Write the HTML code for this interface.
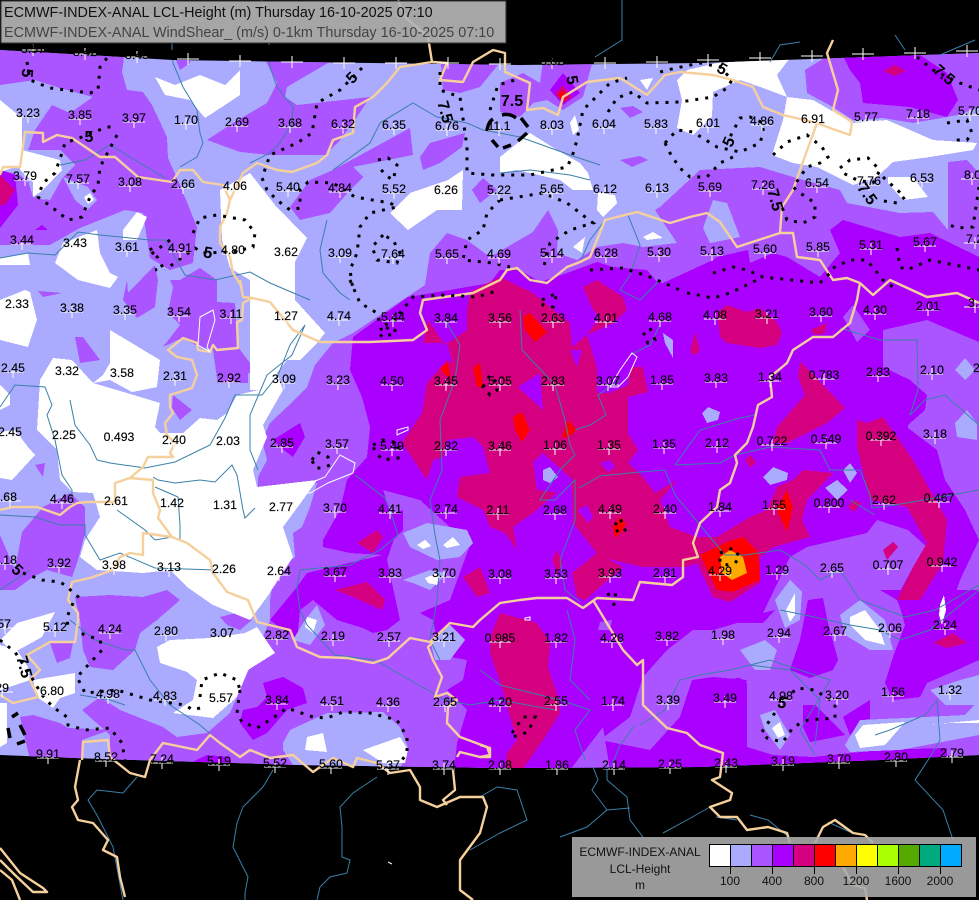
<!DOCTYPE html>
<html lang="en">
<head>
<meta charset="utf-8">
<title>ECMWF-INDEX-ANAL LCL-Height</title>
<style>
html,body{margin:0;padding:0;background:#000;width:979px;height:900px;overflow:hidden}
svg{display:block;font-family:"Liberation Sans",sans-serif}
.d{fill:none;stroke:#000;stroke-width:3;stroke-dasharray:3 7}
.r{fill:none;stroke:#3a80a8;stroke-width:1}
.b{fill:none;stroke:#f6d09c;stroke-width:2.4;stroke-linejoin:round}
.t text{font-size:12.3px;text-anchor:middle;fill:#000;stroke:#000;stroke-width:.15}
.c text{font-size:16px;font-weight:bold;text-anchor:middle;fill:#000}
.s path{shape-rendering:crispEdges}
</style>
</head>
<body>
<svg width="979" height="900" viewBox="0 0 979 900" xmlns="http://www.w3.org/2000/svg">
<defs>
<clipPath id="m"><path d="M0 50L173 60L300 62L520 65L700 63L840 58L979 53V755L880 760L700 767L500 768L300 765L100 759L0 755Z"/></clipPath>
<marker id="x" markerUnits="userSpaceOnUse" markerWidth="24" markerHeight="14" refX="12" refY="7" overflow="visible"><path d="M1 7h22M12 1v12" stroke="#fff" stroke-width="1" fill="none"/></marker>
</defs>
<rect width="979" height="900" fill="#000"/>
<g clip-path="url(#m)">
<rect width="979" height="900" fill="#aaaaff"/>
<!-- light purple -->
<g fill="#aa55ff" class="s">
<path d="M0 50L125 50L122 72L127 90L143 92L152 105L167 137L168 158L180 185L197 227L193 263L170 270L150 258L143 213L125 210L80 228L50 245L0 245Z"/>
<path d="M260 50L350 50L287 87L285 97L297 105L370 97L355 120L340 140L325 155L270 155L240 152L207 140L233 123L267 103L277 83Z"/>
<path d="M440 50L510 50L480 87L460 93L443 90Z"/>
<path d="M172 50L190 50L190 63L180 70Z"/>
<path d="M500 83L523 73L540 83L543 62L593 60L583 97L563 110L547 100L533 103L520 117L500 112Z"/>
<path d="M420 157L430 143L465 133L462 147L440 163L423 170Z"/>
<path d="M472 190L483 178L497 190L480 203Z"/>
<path d="M333 170L410 128L413 155L353 167L363 177L350 190L330 213L300 220L290 207L310 180Z"/>
<path d="M620 108L633 106L643 112L630 118Z"/>
<path d="M620 160L640 156L648 160L632 167Z"/>
<path d="M805 70L837 50L979 50V107L958 115L930 120L913 123L883 118L853 120L833 107L807 93Z"/>
<path d="M948 162L967 160L979 173V260H948Z"/>
<path d="M38 291L62 293L43 297Z"/>
<path d="M127 280L128 293L155 265L158 280L155 307L137 318L123 300Z"/>
<path d="M170 280L180 280L200 268L217 280L217 302L235 303L238 347L250 363L267 363L258 375L248 373L248 383L218 383L217 378L213 350L200 347L182 338L163 347L180 325L168 313L173 287Z"/>
<path d="M75 337L83 337L100 360L80 363Z"/>
<path d="M173 395L192 410L180 420L172 408Z"/>
<path d="M35 465L45 463L43 477Z"/>
<path d="M0 535L15 570L22 532L43 507L70 493L85 507L85 533L78 560L72 577L47 570L33 577L15 590L0 590Z"/>
<path d="M75 597L110 595L143 597L167 590L180 600L157 620L140 633L135 650L113 670L90 667L83 650L80 620Z"/>
<path d="M50 643L73 643L70 658L57 663Z"/>
<path d="M220 617L240 612L252 620L240 630L227 625Z"/>
<path d="M20 717L33 715L60 723L68 728L110 730L82 740L82 770L30 760Z"/>
<path d="M82 710L100 697L120 710L163 727L177 737L207 733L230 713L250 667L283 660L310 667L333 683L377 677L397 690L422 720L422 780H110V735Z"/>
<path d="M430 253L447 233L467 240L490 257L533 232L548 210L558 230L557 253L577 260L597 247L623 243L643 247L677 243L655 210L660 207L700 170L760 167L793 177L840 190L847 203L900 213L933 212L948 230L979 243V780H250V667L270 620L270 600L273 582L287 563L295 557L293 533L302 527L310 507L317 483L290 490L270 497L258 490L258 477L267 460L262 440L270 423L287 407L307 387L315 365L333 343L353 333L425 285Z"/>
</g>
<!-- strong purple -->
<g fill="#aa00ff" class="s">
<path d="M353 337L408 297L450 290L490 283L500 270L520 270L540 282L567 273L597 262L613 267L647 270L657 282L663 283L713 260L717 257L748 250L750 263L773 253L787 257L820 277L840 253L830 230L843 220L900 237L930 233L979 257V342L927 320L883 330L883 367L910 380L927 395L925 410L908 425L908 428L937 450L945 480L965 510L979 540L960 580L947 620V780H453L457 743L467 710L447 690L463 680L467 660L440 655L433 620L420 613L400 620L387 630L373 633L363 628L337 620L313 600L300 610L297 640L270 620L297 587L307 573L340 565L383 555L350 553L323 547L323 540L340 510L347 480L367 457L370 427L362 397L350 370Z"/>
<path d="M840 50L907 50L920 55L947 73L958 100L947 117L910 107L863 103L860 83L850 70Z"/>
<path d="M550 90L563 73L580 93L563 105Z"/>
<path d="M273 440L300 423L305 437L293 457L280 447Z"/>
<path d="M0 170L15 175L18 205L0 228Z"/>
<path d="M42 225L48 230L35 230Z"/>
<path d="M263 683L283 677L303 688L307 703L287 710L267 733L253 740L240 723L243 710L257 707L267 697Z"/>
<path d="M190 763L207 755L230 757L233 770H190Z"/>
</g>
<!-- light purple over strong -->
<g fill="#aa55ff" class="s">
<path d="M630 717L643 677L667 650L693 630L713 630L737 623L763 623L775 610L763 613L790 557L807 547L867 533L877 520L908 530L927 547L913 567L897 597L905 625L893 657L979 620V747L880 750L813 757L773 755L747 747L725 730L747 680L713 677L692 680L680 717L650 750L600 740Z"/>
<path d="M570 770L603 727L610 770Z"/>
<path d="M330 730L343 728L357 735L347 743Z"/>
<path d="M843 317L853 305L870 330L857 342Z"/>
<path d="M497 345L505 335L520 345Z"/>
<path d="M600 622L612 620L610 630L598 630Z"/>
<path d="M383 490L420 500L470 545L450 600L420 613L400 620L387 560L397 530Z"/>
</g>
<g fill="#aa00ff" class="s">
<path d="M808 600L823 598L828 623L838 660L833 670L810 678L790 670L800 640Z"/>
<path d="M880 590H979V660L957 670L927 683L920 697L893 700L885 683L893 657L910 633L897 600Z"/>
<path d="M843 717L870 700L870 720L850 735Z"/>
<path d="M803 705L815 705L835 725L845 735L810 742L803 727Z"/>
<path d="M707 680L740 678L747 683L747 747L700 760L680 750L693 700Z"/>
<path d="M370 523L403 510L403 530L380 555Z"/>
</g>
<!-- magenta -->
<g fill="#d5007f" class="s">
<path d="M470 292L500 277L533 293L570 323L572 347L587 335L597 368L603 368L643 367L648 392L628 397L628 433L638 450L628 463L643 477L655 493L677 480L660 500L670 527L697 537L717 537L750 517L767 510L777 487L793 480L803 470L833 473L807 500L802 520L810 537L773 547L760 557L760 583L730 602L713 597L697 563L685 567L643 567L600 557L573 523L572 483L560 490L533 513L513 527L517 550L505 533L490 527L483 510L457 497L460 477L490 473L483 447L473 437L447 440L443 457L433 460L427 480L402 443L422 413L427 383L447 360L453 363L447 343L423 343L428 320L445 345L467 330L467 310Z"/>
<path d="M583 287L597 280L623 297L627 310L613 323L587 335L600 317L593 310Z"/>
<path d="M717 313L727 305L747 312L760 308L777 322L782 333L777 345L760 348L727 343L720 337Z"/>
<path d="M690 352L695 332L700 350L695 355Z"/>
<path d="M810 330L827 323L825 333L815 335Z"/>
<path d="M800 362L807 368L845 408L827 423L787 443L773 443L777 427L805 395L798 377Z"/>
<path d="M883 71L895 65L906 71L895 76Z"/>
<path d="M555 93L563 85L572 97L563 103Z"/>
<path d="M0 175L15 190L5 205L0 205Z"/>
<path d="M500 613L537 623L550 643L548 667L558 697L560 713L543 740L522 770L505 770L507 753L517 740L510 717L502 687L490 653L490 637Z"/>
<path d="M357 543L377 530L383 537L373 553Z"/>
<path d="M335 590L367 582L385 600L382 610L353 597Z"/>
<path d="M463 577L480 567L490 593L477 597Z"/>
<path d="M458 487L480 477L500 497L500 513L480 500L458 493Z"/>
<path d="M552 560L557 550L563 563L557 573Z"/>
<path d="M572 573L597 553L623 567L585 600L577 597Z"/>
<path d="M857 420L867 423L883 417L913 460L947 520L943 563L920 600L897 600L913 567L927 543L907 507L870 500L857 447Z"/>
<path d="M883 550L893 542L898 547L887 560Z"/>
<path d="M848 507L853 500L862 503L853 512Z"/>
<path d="M745 460L750 455L756 462L750 468Z"/>
<path d="M933 643L953 633L967 643L947 648Z"/>
</g>
<!-- holes in magenta -->
<g fill="#aa00ff" class="s">
<path d="M533 462L543 453L573 480L560 493L537 490Z"/>
<path d="M518 387L540 373L543 410Z"/>
<path d="M570 350L582 350L577 367Z"/>
<path d="M600 463L610 460L615 467L608 472Z"/>
<path d="M578 510L587 505L593 517L588 523Z"/>
<path d="M597 368L608 365L632 360L628 385L610 393L597 393Z"/>
</g>
<!-- red and orange -->
<g fill="#ff0000" class="s">
<path d="M523 317L530 313L547 332L535 342L525 330Z"/>
<path d="M513 417L522 412L530 430L522 442L515 430Z"/>
<path d="M562 437L568 420L577 430L567 438Z"/>
<path d="M778 507L787 490L793 507L787 532L778 513Z"/>
<path d="M613 527L620 517L626 523L623 530L615 538Z"/>
<path d="M700 555L727 542L743 537L758 552L760 580L733 592L717 590Z"/>
<path d="M440 368L448 363L450 377L445 375Z"/>
<path d="M473 368L480 363L483 387L477 387Z"/>
<path d="M558 95L563 90L567 97L563 102Z"/>
</g>
<path fill="#ffaa00" d="M720 557L730 550L743 557L747 573L732 580L722 573Z"/>
<!-- periwinkle patches -->
<g fill="#aaaaff" class="s">
<path d="M0 85L35 80L60 88L93 97L70 113L52 105L35 130L23 165L33 197L45 200L20 175L0 170Z"/>
<path d="M20 150L60 150L75 165L63 177L50 200L33 197Z"/>
<path d="M63 177L88 187L97 200L87 210L75 200Z"/>
<path d="M713 200L727 203L740 237L710 243L703 228Z"/>
<path d="M702 413L708 407L720 412L718 420L707 423Z"/>
<path d="M763 477L773 467L788 473L787 480L770 485Z"/>
<path d="M825 488L837 480L848 490L837 500Z"/>
<path d="M843 470L850 463L857 473L850 483Z"/>
<path d="M663 333L673 340L673 358L665 343Z"/>
<path d="M955 423L967 410L977 423L977 440L957 437Z"/>
<path d="M955 370L965 358L975 370L965 380Z"/>
<path d="M543 470L550 467L558 477L550 483L543 480Z"/>
<path d="M283 743L290 730L327 713L383 712L400 727L408 747L400 770L333 770L293 765L283 750Z"/>
<path d="M403 533L427 523L467 530L473 543L460 557L437 560L410 547Z"/>
<path d="M403 580L430 570L447 573L430 590L413 583Z"/>
<path d="M775 600L790 580L802 592L800 620L785 628Z"/>
<path d="M840 615L860 600L885 620L893 650L870 650L845 635Z"/>
<path d="M740 650L765 640L777 650L770 670L755 670Z"/>
<path d="M845 745L860 720L905 718L965 715L979 700V735L900 750L850 752Z"/>
<path d="M760 715L775 710L790 735L780 750L765 730Z"/>
<path d="M930 690L960 680L979 675V705L945 705Z"/>
<path d="M305 620L317 605L325 625L310 645L293 640Z"/>
<path d="M430 640L450 625L465 640L450 660L435 660Z"/>
<path d="M93 383L127 393L125 410L130 427L115 450L98 470L90 447L100 427Z"/>
<path d="M110 520L118 505L113 520Z"/>
<path d="M200 535L213 527L220 535L208 547Z"/>
<path d="M247 540L270 523L270 527L255 540L247 540Z"/>
</g>
<!-- whites -->
<g fill="#fff" class="s">
<path d="M0 100L22 118L22 165L0 172Z"/>
<path d="M22 150L60 160L62 170L43 190L33 197L33 182L20 170Z"/>
<path d="M84 197L90 193L94 200L88 204Z"/>
<path d="M155 77L175 85L200 75L225 85L240 70L240 95L225 105L205 118L190 100L165 95Z"/>
<path d="M0 258L28 253L30 265L0 265Z"/>
<path d="M55 263L63 243L97 230L100 253L110 273L118 277L110 288L78 280Z"/>
<path d="M123 230L137 212L147 217L137 240L123 240Z"/>
<path d="M0 300L25 290L30 292L37 320L28 347L0 340Z"/>
<path d="M220 190L250 173L275 205L307 238L295 262L295 300L325 333L317 343L300 360L287 360L277 373L283 390L250 390L250 280L230 268L222 240Z"/>
<path d="M110 330L160 360L157 387L132 392L110 380L93 383L103 375L110 363Z"/>
<path d="M53 358L72 360L93 383L127 393L160 403L155 427L160 433L183 433L200 418L217 420L227 413L237 395L267 388L283 390L263 425L267 437L253 470L257 487L317 480L305 497L283 527L293 557L267 597L250 620L213 605L187 587L170 570L143 573L97 570L80 557L85 540L100 517L93 493L72 492L60 480L57 450L37 430L40 380Z"/>
<path d="M0 385L10 395L10 405L0 410Z"/>
<path d="M0 432L15 430L28 447L35 455L12 480L0 478Z"/>
<path d="M17 623L55 612L42 637L13 653L0 640Z"/>
<path d="M157 647L170 640L210 638L245 633L257 627L275 653L248 670L237 697L213 718L173 713L193 700L197 680L187 672L160 663Z"/>
<path d="M33 680L75 673L75 693L60 698L53 708L37 697Z"/>
<path d="M0 703L7 703L7 743L0 747Z"/>
<path d="M0 645L17 650L28 667L30 680L0 690Z"/>
<path d="M307 737L323 733L327 752L305 750Z"/>
<path d="M363 750L400 737L408 750L405 763L383 763Z"/>
<path d="M307 617L317 620L313 633L305 627Z"/>
<path d="M790 58L777 75L787 97L763 88L740 80L713 92L712 117L693 135L677 128L682 100L677 80L687 70L717 63Z"/>
<path d="M787 97L813 100L853 123L887 120L933 140L977 143L973 150L930 157L893 162L877 177L853 185L817 167L793 163L772 155L783 120Z"/>
<path d="M888 177L913 177L928 197L903 200L888 183Z"/>
<path d="M500 157L530 133L557 150L580 163L588 173L593 190L573 190L560 180L517 170L500 173Z"/>
<path d="M390 213L410 193L448 180L463 170L462 210L437 210L408 230Z"/>
<path d="M598 193L615 195L617 203L603 217L597 210Z"/>
<path d="M643 237L653 232L663 238L647 240Z"/>
<path d="M573 247L585 237L582 253Z"/>
<path d="M570 123L575 115L579 130L573 135Z"/>
<path d="M640 80L653 78L647 90Z"/>
<path d="M417 545L425 540L431 546L423 549Z"/>
<path d="M443 545L453 537L460 545L447 548Z"/>
<path d="M425 578L440 572L437 585L428 583Z"/>
<path d="M786 610L795 593L795 615L790 622Z"/>
<path d="M850 617L865 610L880 630L885 645L865 640L850 625Z"/>
<path d="M855 735L863 725L905 722L885 745L860 748Z"/>
<path d="M772 728L780 722L785 735L778 738Z"/>
<path d="M940 605L944 595L946 610L942 625L939 615Z"/>
<path d="M925 725L979 720V723L950 723Z"/>
</g>
<!-- rivers on map -->
<g class="r">
<path d="M172 50L173 63L183 87L197 110L200 133L203 143L197 157L180 167"/>
<path d="M269 45L270 67L277 87L293 107L292 123L280 143L270 153L250 163"/>
<path d="M327 220L320 250L323 273L340 293L350 300"/>
<path d="M333 170L370 143L380 123L413 103L437 117L467 123L483 130L520 137L570 155L600 165"/>
<path d="M60 165L85 160L110 145L135 160L165 178"/>
<path d="M0 258L28 253L55 255L78 232L100 235L150 240L165 240L185 275L215 280L250 272L270 283L310 300"/>
<path d="M500 173L530 170L570 175L590 180"/>
<path d="M605 220L590 240L580 262"/>
<path d="M628 215L640 245L630 275L620 290L640 300L660 280"/>
<path d="M0 407L15 385L45 387L52 405L47 415L55 440L62 475L72 490L72 505"/>
<path d="M70 400L75 425L90 445L97 460L110 463L145 468L175 462L210 445L225 418L235 395L262 395L278 375L290 345L305 325L292 355L267 375L250 415L250 450L258 470"/>
<path d="M153 477L158 480L175 483L200 480L215 482L232 465L237 475L243 510L245 518L255 508"/>
<path d="M155 487L178 497L180 525L180 540"/>
<path d="M117 510L145 530L155 540L172 537"/>
<path d="M0 515L35 517L60 525L85 525L85 535L100 560L120 553L155 568L215 570"/>
<path d="M30 570L0 590"/>
<path d="M355 475L385 498L390 510L398 535L380 550L350 565L300 570L297 587L300 610L307 625L335 655L375 660L410 680L445 700L470 705L500 700L555 710"/>
<path d="M70 620L95 640L125 650L135 650L150 680L170 705L200 725L215 738"/>
<path d="M80 695L110 700L125 705"/>
<path d="M445 320L460 345L455 380L440 420L442 470L430 500L435 535L440 560L437 600L430 640L440 660"/>
<path d="M520 310L522 350L555 385L565 420L570 445L575 455L560 470L540 500L555 500L575 480L575 520L560 560L565 590L580 602"/>
<path d="M579 488L600 476L640 472L665 470L675 495L700 525L725 555L745 555L780 550L805 565L820 580L840 570L860 600L905 617L935 610L979 585"/>
<path d="M675 465L700 430L740 418L755 415"/>
<path d="M675 465L720 463L735 455L770 447L820 450L830 470L860 470L870 495L872 508L895 505L940 497L979 490"/>
<path d="M850 500L875 515"/>
<path d="M660 325L650 345L630 355"/>
<path d="M620 380L598 395L606 415L590 425L575 430"/>
<path d="M840 328L880 340L917 340L918 390L910 415L925 400L945 395L979 425"/>
<path d="M480 670L500 685L520 690L560 700L590 710L575 730L585 760"/>
<path d="M567 610L575 640L570 680L590 700"/>
<path d="M635 725L620 745L610 770"/>
<path d="M640 725L665 710L680 680L700 675L730 670L750 665L770 660L830 680L800 730L815 755"/>
<path d="M750 665L790 670L820 700L815 745"/>
<path d="M875 735L890 730L925 715L937 700L940 740L930 757"/>
<path d="M780 610L805 615L850 625L880 630L900 640L930 630L979 590"/>
</g>
</g>
<!-- rivers outside map / black -->
<g class="r">
<path d="M273 770L263 787L243 807L237 823L233 847L248 877L245 893L245 900"/>
<path d="M377 777L353 793L340 807L342 827L342 857L350 860L347 873L330 877L320 887L317 900"/>
<path d="M137 777L123 793L97 790L88 800L98 817L113 847L123 900"/>
<path d="M480 797L497 787L517 790L527 820L500 833L470 850"/>
<path d="M593 767L598 780L592 790L607 810L587 827L560 837"/>
<path d="M607 767L607 780L627 797L630 820L643 837"/>
<path d="M607 810L630 808"/>
<path d="M710 807L687 820L663 833"/>
<path d="M930 757L915 780L943 810L953 840"/>
<path d="M716 817L737 820"/>
<path d="M750 815L768 820L790 838"/>
<path d="M828 822L850 832"/>
<path d="M172 50L172 35L150 15L130 0"/>
<path d="M269 45L269 30L262 0"/>
<path d="M440 40L435 20"/>
<path d="M595 57L622 40L622 0"/>
<path d="M770 62L780 45L800 42"/>
<path d="M940 55L975 40"/>
<path d="M905 50L895 35"/>
</g>
<!-- borders -->
<g class="b">
<path d="M0 175L3 167L20 167L25 132L43 133L43 142L57 135L72 138L100 157L115 157L138 177L172 182L180 170L193 170L203 182L223 185L230 200L243 173L257 163L277 170L292 172L317 163L327 155L333 140L353 133L355 107L373 97L387 83L400 67L432 62L428 37L405 17L398 0"/>
<path d="M432 62L447 63L440 80L463 82L473 62L493 50L505 53L505 72L530 83L527 110L543 108L558 115L563 97L587 82L620 78L647 95L665 75L680 72L713 75L733 80L753 87L763 107L783 115L817 123L830 128L850 135L852 122L833 110L838 90L827 53L833 40"/>
<path d="M817 123L800 170L793 190L782 207L780 233L793 233L797 257L820 260L833 280L847 278L860 283L857 300L850 323L833 337L813 337L793 350L787 363L770 377L772 397L758 405L753 427L747 443L735 455L737 463L730 483L720 490L717 507L700 523L693 543L698 557L683 560L683 577L672 585L640 582L633 600L597 598L583 608L567 598L537 598L520 600L500 603L480 620L473 627L450 623L430 642L410 638L388 658L373 663L347 658L320 657L297 647L290 630L257 622L248 600L227 592L213 573L210 560L187 543L172 537L158 518L160 510L153 493L153 480L130 478L115 483L115 502L87 502L77 503L70 507L60 515L37 507L13 507L0 510"/>
<path d="M860 283L873 295L890 280L927 297L957 293L979 303"/>
<path d="M240 280L243 297L252 298L243 303L242 320L237 322L238 348L217 350L213 345L210 352L198 350L197 343L183 338L168 350L177 357L192 360L197 375L192 388L170 395L170 407L173 413L165 423L167 435L175 443L170 453L173 457L148 457L143 467L130 478"/>
<path d="M230 200L227 213L220 227L220 243L230 257L233 273L242 287"/>
<path d="M252 298L270 302L293 330L320 342L370 342L413 340L427 330L420 313L423 300L473 293L500 280L507 270L517 268L530 280L547 283L567 267L580 262L590 257L605 220L637 212L670 223L690 217L707 213L720 222L737 247L780 233"/>
<path d="M172 537L143 533L143 555L130 553L120 557L113 570L90 578L72 582L68 600L78 613L78 620L75 642L50 642L27 655L40 670L30 680L38 697L13 703L0 695"/>
<path d="M593 600L623 650L637 665L643 660L643 680L643 705L667 728L687 733L700 745L723 753L720 777L712 780L732 793L730 800L710 807L720 817L737 817L747 830L768 827L787 833L790 843"/>
<path d="M815 843L823 827L835 820L853 833L865 835L873 843"/>
<path d="M843 867L853 885L865 888L867 900"/>
<path d="M82 760L83 742L108 740L110 757L130 773L145 777L150 760L163 743L197 750L210 735L220 743L240 757L250 750L270 758L293 755L313 772L333 758L353 767L357 758L377 763L390 773L410 770L420 787L420 800L437 807L460 797L483 797L487 807L480 833L460 860L460 890L473 900"/>
<path d="M80 760L75 787L78 800L72 807L78 820L93 823L108 840L103 850L117 857L120 877L125 897"/>
<path d="M453 770L455 790L443 800L447 805"/>
<path d="M457 757L460 752L480 757L490 755L487 747L460 737L447 723L448 707L457 700L447 693L435 697L442 677L433 660L428 647L433 642"/>
<path d="M480 745L490 748L490 757L480 757"/>
<path d="M0 848L20 873L43 888L47 892L33 892L15 875L0 860"/>
<path d="M0 870L12 880L20 900"/>
</g>
<!-- lakes -->
<g fill="none" stroke="#fff" stroke-width="1">
<path d="M257 497L267 502L283 495L293 490L325 477L340 455L355 463L353 473L328 483L310 493L297 492"/>
<path d="M200 317L213 310L215 320L207 347L210 352L198 345Z"/>
<path d="M397 430L408 427L408 430L397 435Z"/>
<path d="M620 370L632 353L637 357L628 377L618 387L610 387Z"/>
<path d="M525 618L530 617L530 620L525 620Z"/>
<path d="M388 862L392 864"/>
</g>
<!-- dotted contours -->
<g clip-path="url(#m)"><g class="d">
<path d="M27 62L30 80L50 88L90 93L98 90L100 67L107 58"/>
<path d="M117 135L108 152L100 167L98 185L90 197L82 217L68 220L53 208L38 197L43 183L55 173L62 153L65 143L82 137L107 127L115 127"/>
<path d="M362 68L340 90L317 103L312 133L297 143L270 155L262 178L267 190L277 200L290 210L300 208L300 190L308 182L333 183L355 197L390 203L397 207L370 213L360 227L357 253L350 270L353 290"/>
<path d="M193 233L200 218L217 215L245 220L255 233L253 247L233 252L203 253L195 248L165 270"/>
<path d="M440 72L440 90L460 97L467 147L467 173L493 175L530 175L567 167L572 157L577 140L583 110L610 83L627 78"/>
<path d="M378 160L388 158L397 165L393 180L385 175L378 165"/>
<path d="M383 235L372 247L377 260L397 263L400 253L393 240Z"/>
<path d="M500 200L487 213L483 230L467 240L463 260L493 263L510 267"/>
<path d="M608 112L617 98L633 92L647 103L680 102L713 97L727 88L732 80L720 67L700 63L667 70L657 73"/>
<path d="M500 200L543 193L567 203L593 223L570 230L550 243L543 270"/>
<path d="M665 143L677 130L693 132L717 147L740 152L760 143L763 133L763 123L750 117L740 118L730 137"/>
<path d="M665 143L672 157L682 170L690 177L707 177L720 163L733 157"/>
<path d="M773 155L787 142L807 135L822 147L828 157L820 163L807 167L793 187L800 193L815 203L815 217L803 223L787 220L782 207"/>
<path d="M840 168L850 160L868 158L880 170L873 183L857 180L843 173"/>
<path d="M883 177L905 197L897 203L877 200"/>
<path d="M917 57L933 70L960 83L979 90"/>
<path d="M947 123L967 120L972 133L967 140L950 140"/>
<path d="M979 187L975 213L973 227L957 228L945 223"/>
<path d="M897 248L900 267L907 270L930 260L979 270"/>
<path d="M833 268L850 260L867 260L883 280L893 287"/>
<path d="M713 273L733 267L747 270L763 277L820 283L833 270"/>
<path d="M590 270L623 268L650 277L680 290"/>
<path d="M687 293L713 298L730 293L757 280"/>
<path d="M350 280L360 303L377 313L382 332L380 337L413 297L443 295L477 297L500 290"/>
<path d="M385 325L395 320L395 335L383 335"/>
<path d="M312 460L317 452L328 457L330 465L323 468L315 468Z"/>
<path d="M373 445L383 440L398 443L398 458L383 460L375 452Z"/>
<path d="M483 387L490 375L497 383L497 390L490 395Z"/>
<path d="M542 300L557 293L553 307L543 305Z"/>
<path d="M643 335L650 328L655 340L648 343Z"/>
<path d="M615 525L620 518L625 530L618 533Z"/>
<path d="M720 553L733 548L740 557L735 563L728 565L720 563Z"/>
<path d="M607 595L615 592L616 600L610 612"/>
<path d="M512 733L523 717L535 717L528 732L513 737Z"/>
<path d="M762 732L772 717L782 703L797 688L815 690L835 703L835 718L808 720L793 727L787 737L782 742L767 738Z"/>
<path d="M240 690L237 713L242 722L257 728L273 718L287 708L313 717L327 718L343 712L370 713L397 720L407 737L407 753L400 763"/>
<path d="M200 697L202 680L220 673L237 680L240 690"/>
<path d="M200 708L193 710L185 705L150 700L117 690L85 693L77 677L90 663L102 650L100 640L77 632"/>
<path d="M0 640L15 652L32 678L42 695L53 707L67 717L68 725L85 730L110 728L122 743L125 760"/>
<path d="M73 603L67 617L68 628"/>
<path d="M23 573L42 580L60 582L68 587L73 593L80 598"/>
<path d="M150 248L158 258L163 268L155 270"/>
<path d="M490 110L498 85L515 80"/>
<path d="M170 240L150 255"/>
</g></g>
<!-- thick dashes -->
<path fill="none" stroke="#000" stroke-width="3.5" d="M487 131Q488 122 493 119M502 115Q510 113 516 118M521 118L528 127M527 133L518 141M492 140L498 147M503 148L511 145M10 738L8 728M12 717L18 713M20 725L25 735M17 744L25 741"/>
<!-- station crosses -->
<polyline fill="none" stroke="none" marker-start="url(#x)" marker-mid="url(#x)" marker-end="url(#x)" points="33,50 85,54 137,57 188,59 240,61 292,62 344,63 396,63 448,63 500,64 552,63 605,63 657,62 708,60 760,58 812,56 863,54 915,53 967,51 28,117 80,119 134,122 186,124 237,126 290,127 343,128 394,129 447,130 499,130 552,129 604,128 656,128 708,127 762,125 813,123 866,121 918,118 970,115 25,180 78,183 130,186 183,188 235,190 288,191 340,192 394,193 446,194 499,194 552,193 605,193 657,192 710,191 763,189 817,187 869,185 922,182 972,179 22,244 75,247 127,251 180,252 233,254 286,256 340,257 393,258 447,258 499,258 552,257 606,257 659,256 712,255 765,253 818,251 871,249 925,246 975,243 17,308 72,312 125,314 179,316 231,318 286,320 339,320 393,321 446,322 500,322 553,322 606,322 660,321 715,319 767,318 821,316 875,314 928,310 975,307 13,372 67,375 122,377 175,380 229,382 284,383 338,384 392,385 446,385 500,385 553,385 608,385 662,384 716,382 770,381 824,379 878,376 932,374 10,436 64,439 119,441 174,444 228,445 282,447 337,448 392,450 446,450 500,450 555,449 609,449 664,448 717,447 772,445 826,443 881,440 935,438 10,501 62,503 116,505 172,507 225,509 281,511 335,512 390,513 446,513 498,514 555,514 610,513 665,513 720,511 774,509 829,507 884,504 939,502 5,564 59,567 114,569 169,571 224,573 279,575 335,576 390,577 444,577 500,578 556,578 610,577 665,577 720,575 777,574 832,572 888,569 942,566 5,628 55,631 110,633 166,635 222,637 277,639 333,640 389,641 444,641 500,642 556,642 612,642 667,640 723,639 779,637 835,635 890,632 945,629 2,692 52,695 108,698 165,700 221,702 277,704 332,705 388,706 445,706 500,706 556,705 613,705 668,704 725,702 781,700 837,699 893,696 950,694 48,758 106,761 162,763 219,765 275,767 331,768 388,769 444,769 500,769 557,769 614,769 670,768 726,767 783,765 839,763 896,761 952,757"/>
<!-- station labels -->
<g class="t">
<text x="33" y="53">3.57</text><text x="85" y="56">3.42</text><text x="137" y="59">3.45</text><text x="552" y="65">3.82</text>
<text x="28" y="117">3.23</text><text x="80" y="119">3.85</text><text x="134" y="122">3.97</text><text x="186" y="124">1.70</text><text x="237" y="126">2.69</text><text x="290" y="127">3.68</text><text x="343" y="128">6.32</text><text x="394" y="129">6.35</text><text x="447" y="130">6.76</text><text x="499" y="130">11.1</text><text x="552" y="129">8.03</text><text x="604" y="128">6.04</text><text x="656" y="128">5.83</text><text x="708" y="127">6.01</text><text x="762" y="125">4.86</text><text x="813" y="123">6.91</text><text x="866" y="121">5.77</text><text x="918" y="118">7.18</text><text x="970" y="115">5.70</text>
<text x="25" y="180">3.79</text><text x="78" y="183">7.57</text><text x="130" y="186">3.08</text><text x="183" y="188">2.66</text><text x="235" y="190">4.06</text><text x="288" y="191">5.40</text><text x="340" y="192">4.84</text><text x="394" y="193">5.52</text><text x="446" y="194">6.26</text><text x="499" y="194">5.22</text><text x="552" y="193">5.65</text><text x="605" y="193">6.12</text><text x="657" y="192">6.13</text><text x="710" y="191">5.69</text><text x="763" y="189">7.26</text><text x="817" y="187">6.54</text><text x="869" y="185">7.76</text><text x="922" y="182">6.53</text><text x="976" y="179">8.05</text>
<text x="22" y="244">3.44</text><text x="75" y="247">3.43</text><text x="127" y="251">3.61</text><text x="180" y="252">4.91</text><text x="233" y="254">4.80</text><text x="286" y="256">3.62</text><text x="340" y="257">3.09</text><text x="393" y="258">7.64</text><text x="447" y="258">5.65</text><text x="499" y="258">4.69</text><text x="552" y="257">5.14</text><text x="606" y="257">6.28</text><text x="659" y="256">5.30</text><text x="712" y="255">5.13</text><text x="765" y="253">5.60</text><text x="818" y="251">5.85</text><text x="871" y="249">5.31</text><text x="925" y="246">5.67</text><text x="978" y="243">7.24</text>
<text x="17" y="308">2.33</text><text x="72" y="312">3.38</text><text x="125" y="314">3.35</text><text x="179" y="316">3.54</text><text x="231" y="318">3.11</text><text x="286" y="320">1.27</text><text x="339" y="320">4.74</text><text x="393" y="321">5.44</text><text x="446" y="322">3.84</text><text x="500" y="322">3.56</text><text x="553" y="322">2.63</text><text x="606" y="322">4.01</text><text x="660" y="321">4.68</text><text x="715" y="319">4.08</text><text x="767" y="318">3.21</text><text x="821" y="316">3.60</text><text x="875" y="314">4.30</text><text x="928" y="310">2.01</text><text x="980" y="307">3.10</text>
<text x="13" y="372">2.45</text><text x="67" y="375">3.32</text><text x="122" y="377">3.58</text><text x="175" y="380">2.31</text><text x="229" y="382">2.92</text><text x="284" y="383">3.09</text><text x="338" y="384">3.23</text><text x="392" y="385">4.50</text><text x="446" y="385">3.45</text><text x="500" y="385">5.05</text><text x="553" y="385">2.83</text><text x="608" y="385">3.07</text><text x="662" y="384">1.85</text><text x="716" y="382">3.83</text><text x="770" y="381">1.34</text><text x="824" y="379">0.783</text><text x="878" y="376">2.83</text><text x="932" y="374">2.10</text><text x="985" y="372">2.10</text>
<text x="10" y="436">2.45</text><text x="64" y="439">2.25</text><text x="119" y="441">0.493</text><text x="174" y="444">2.40</text><text x="228" y="445">2.03</text><text x="282" y="447">2.85</text><text x="337" y="448">3.57</text><text x="392" y="450">5.49</text><text x="446" y="450">2.82</text><text x="500" y="450">3.46</text><text x="555" y="449">1.06</text><text x="609" y="449">1.35</text><text x="664" y="448">1.35</text><text x="717" y="447">2.12</text><text x="772" y="445">0.722</text><text x="826" y="443">0.549</text><text x="881" y="440">0.392</text><text x="935" y="438">3.18</text>
<text x="5" y="501">1.68</text><text x="62" y="503">4.46</text><text x="116" y="505">2.61</text><text x="172" y="507">1.42</text><text x="225" y="509">1.31</text><text x="281" y="511">2.77</text><text x="335" y="512">3.70</text><text x="390" y="513">4.41</text><text x="446" y="513">2.74</text><text x="498" y="514">2.11</text><text x="555" y="514">2.68</text><text x="610" y="513">4.49</text><text x="665" y="513">2.40</text><text x="720" y="511">1.84</text><text x="774" y="509">1.55</text><text x="829" y="507">0.800</text><text x="884" y="504">2.62</text><text x="939" y="502">0.467</text>
<text x="5" y="564">4.18</text><text x="59" y="567">3.92</text><text x="114" y="569">3.98</text><text x="169" y="571">3.13</text><text x="224" y="573">2.26</text><text x="279" y="575">2.64</text><text x="335" y="576">3.67</text><text x="390" y="577">3.83</text><text x="444" y="577">3.70</text><text x="500" y="578">3.08</text><text x="556" y="578">3.53</text><text x="610" y="577">3.93</text><text x="665" y="577">2.81</text><text x="720" y="575">4.29</text><text x="777" y="574">1.29</text><text x="832" y="572">2.65</text><text x="888" y="569">0.707</text><text x="942" y="566">0.942</text>
<text x="-1" y="628">4.57</text><text x="55" y="631">5.12</text><text x="110" y="633">4.24</text><text x="166" y="635">2.80</text><text x="222" y="637">3.07</text><text x="277" y="639">2.82</text><text x="333" y="640">2.19</text><text x="389" y="641">2.57</text><text x="444" y="641">3.21</text><text x="500" y="642">0.985</text><text x="556" y="642">1.82</text><text x="612" y="642">4.28</text><text x="667" y="640">3.82</text><text x="723" y="639">1.98</text><text x="779" y="637">2.94</text><text x="835" y="635">2.67</text><text x="890" y="632">2.06</text><text x="945" y="629">2.24</text>
<text x="-3" y="692">5.29</text><text x="52" y="695">6.80</text><text x="108" y="698">4.98</text><text x="165" y="700">4.83</text><text x="221" y="702">5.57</text><text x="277" y="704">3.84</text><text x="332" y="705">4.51</text><text x="388" y="706">4.36</text><text x="445" y="706">2.65</text><text x="500" y="706">4.20</text><text x="556" y="705">2.55</text><text x="613" y="705">1.74</text><text x="668" y="704">3.39</text><text x="725" y="702">3.49</text><text x="781" y="700">4.98</text><text x="837" y="699">3.20</text><text x="893" y="696">1.56</text><text x="950" y="694">1.32</text>
<text x="48" y="758">9.91</text><text x="106" y="761">8.52</text><text x="162" y="763">7.24</text><text x="219" y="765">5.19</text><text x="275" y="767">5.52</text><text x="331" y="768">5.60</text><text x="388" y="769">5.37</text><text x="444" y="769">3.74</text><text x="500" y="769">2.08</text><text x="557" y="769">1.86</text><text x="614" y="769">2.14</text><text x="670" y="768">2.25</text><text x="726" y="767">2.43</text><text x="783" y="765">3.19</text><text x="839" y="763">3.70</text><text x="896" y="761">2.80</text><text x="952" y="757">2.79</text>
</g>
<!-- contour labels -->
<g class="c">
<text transform="translate(27 73) rotate(95)" x="0" y="5">5</text>
<text x="89" y="142">5</text>
<text transform="translate(352 78) rotate(-45)" x="0" y="5">5</text>
<text transform="translate(445 112) rotate(75)" x="0" y="5">7.5</text>
<text transform="translate(208 253) rotate(10)" x="0" y="5">5</text>
<text x="512" y="106">7.5</text>
<text transform="translate(572 80) rotate(80)" x="0" y="5">5</text>
<text transform="translate(722 69) rotate(30)" x="0" y="5">5</text>
<text transform="translate(729 142) rotate(-65)" x="0" y="5">5</text>
<text transform="translate(775 200) rotate(75)" x="0" y="5">7.5</text>
<text transform="translate(867 194) rotate(55)" x="0" y="5">7.5</text>
<text transform="translate(944 75) rotate(40)" x="0" y="5">7.5</text>
<text transform="translate(17 570) rotate(45)" x="0" y="5">5</text>
<text transform="translate(24 667) rotate(75)" x="0" y="5">7.5</text>
<text transform="translate(782 703) rotate(10)" x="0" y="5">5</text>
</g>
<!-- title panel -->
<rect x="1" y="1" width="505" height="42" fill="#b4b4b4" fill-opacity=".92" stroke="#333" stroke-width="1"/>
<text x="4" y="17" font-size="14.4" fill="#111">ECMWF-INDEX-ANAL LCL-Height (m) Thursday 16-10-2025 07:10</text>
<text x="4" y="37" font-size="14.4" fill="#444">ECMWF-INDEX-ANAL WindShear_ (m/s) 0-1km Thursday 16-10-2025 07:10</text>
<!-- legend -->
<rect x="572" y="837" width="404" height="60" fill="#aaa" fill-opacity=".9"/>
<g font-size="12" text-anchor="middle" fill="#111">
<text x="640" y="856">ECMWF-INDEX-ANAL</text>
<text x="640" y="873">LCL-Height</text>
<text x="640" y="889">m</text>
<text x="730" y="885">100</text><text x="772" y="885">400</text><text x="814" y="885">800</text><text x="856" y="885">1200</text><text x="898" y="885">1600</text><text x="940" y="885">2000</text>
</g>
<g stroke="#000" stroke-width="1">
<rect x="709.5" y="844.5" width="21" height="22" fill="#fff"/>
<rect x="730.5" y="844.5" width="21" height="22" fill="#aaaaff"/>
<rect x="751.5" y="844.5" width="21" height="22" fill="#aa55ff"/>
<rect x="772.5" y="844.5" width="21" height="22" fill="#aa00ff"/>
<rect x="793.5" y="844.5" width="21" height="22" fill="#d5007f"/>
<rect x="814.5" y="844.5" width="21" height="22" fill="#ff0000"/>
<rect x="835.5" y="844.5" width="21" height="22" fill="#ffaa00"/>
<rect x="856.5" y="844.5" width="21" height="22" fill="#ffff00"/>
<rect x="877.5" y="844.5" width="21" height="22" fill="#aaff00"/>
<rect x="898.5" y="844.5" width="21" height="22" fill="#55aa00"/>
<rect x="919.5" y="844.5" width="21" height="22" fill="#00aa7f"/>
<rect x="940.5" y="844.5" width="21" height="22" fill="#00aaff"/>
<path d="M730.5 867v7M772.5 867v7M814.5 867v7M856.5 867v7M898.5 867v7M940.5 867v7"/>
</g>
</svg>
</body>
</html>
